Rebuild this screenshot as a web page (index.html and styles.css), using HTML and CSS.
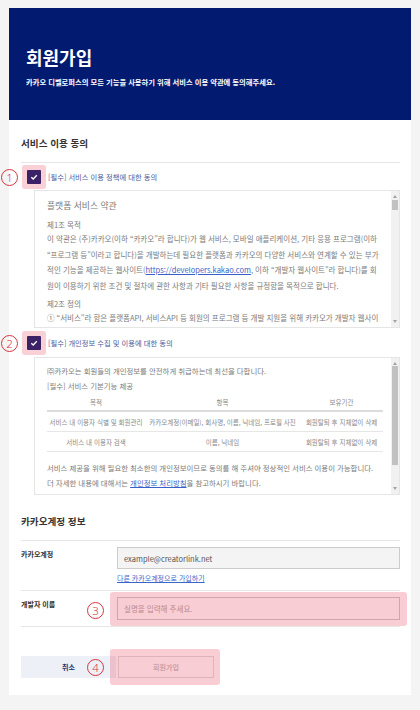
FILE: index.html
```html
<!DOCTYPE html>
<html lang="ko">
<head>
    <meta charset="UTF-8">
    <meta name="viewport" content="width=device-width, initial-scale=1.0">
    <title>회원가입</title>
    <link rel="stylesheet" href="styles.css">
</head>
<body>
    <div class="join-container">
        <div class="hero">
            <h1 class="hero-title">회원가입</h1>
            <p class="hero-desc">카카오 디벨로퍼스의 모든 기능을 사용하기 위해 서비스 이용 약관에 동의해주세요.</p>
        </div>

        <div class="content">
            <h2 class="section-title">서비스 이용 동의</h2>

            <div class="agree-row">
                <span class="mark">1</span>
                <span class="check-wrap">
                    <span class="check"><svg viewBox="0 0 14 14" width="14" height="14"><path d="M4.3 7.2 6.2 9 9.8 5.2" fill="none" stroke="#fff" stroke-width="1.3"/></svg></span>
                </span>
                <span class="agree-label">[필수] 서비스 이용 정책에 대한 동의</span>
            </div>
            <div class="terms">
                <div class="terms-body">
                    <p class="terms-title">플랫폼 서비스 약관</p>
                    <p class="article-title">제1조 목적</p>
                    <p class="article-text">이 약관은 (주)카카오(이하 “카카오”라 합니다)가 웹 서비스, 모바일 애플리케이션, 기타 응용 프로그램(이하 “프로그램 등”이라고 합니다)을 개발하는데 필요한 플랫폼과 카카오의 다양한 서비스와 연계할 수 있는 부가적인 기능을 제공하는 웹사이트(<a class="text-link" href="#">https://developers.kakao.com</a>, 이하 “개발자 웹사이트”라 합니다)를 회원이 이용하기 위한 조건 및 절차에 관한 사항과 기타 필요한 사항을 규정함을 목적으로 합니다.</p>
                    <p class="article-title">제2조 정의</p>
                    <p class="article-text">① “서비스”라 함은 플랫폼API, 서비스API 등 회원의 프로그램 등 개발 지원을 위해 카카오가 개발자 웹사이트를 통하여 제공하는 일체의 서비스를 말합니다.</p>
                </div>
                <div class="scrollbar">
                    <span class="arrow up"></span>
                    <span class="thumb short"></span>
                    <span class="arrow down"></span>
                </div>
            </div>

            <div class="agree-row second">
                <span class="mark">2</span>
                <span class="check-wrap">
                    <span class="check"><svg viewBox="0 0 14 14" width="14" height="14"><path d="M4.3 7.2 6.2 9 9.8 5.2" fill="none" stroke="#fff" stroke-width="1.3"/></svg></span>
                </span>
                <span class="agree-label">[필수] 개인정보 수집 및 이용에 대한 동의</span>
            </div>
            <div class="terms">
                <div class="terms-body privacy">
                    <p class="privacy-text">㈜카카오는 회원들의 개인정보를 안전하게 취급하는데 최선을 다합니다.</p>
                    <p class="privacy-text">[필수] 서비스 기본기능 제공</p>
                    <table class="privacy-table">
                        <colgroup>
                            <col style="width: 98px">
                            <col style="width: 155px">
                            <col>
                        </colgroup>
                        <tr>
                            <th>목적</th>
                            <th>항목</th>
                            <th>보유기간</th>
                        </tr>
                        <tr>
                            <td>서비스 내 이용자 식별 및 회원관리</td>
                            <td>카카오계정(이메일), 회사명, 이름, 닉네임, 프로필 사진</td>
                            <td>회원탈퇴 후 지체없이 삭제</td>
                        </tr>
                        <tr>
                            <td>서비스 내 이용자 검색</td>
                            <td>이름, 닉네임</td>
                            <td>회원탈퇴 후 지체없이 삭제</td>
                        </tr>
                    </table>
                    <p class="privacy-text note">서비스 제공을 위해 필요한 최소한의 개인정보이므로 동의를 해 주셔야 정상적인 서비스 이용이 가능합니다.<br>더 자세한 내용에 대해서는 <a class="text-link" href="#">개인정보 처리방침</a>을 참고하시기 바랍니다.</p>
                </div>
                <div class="scrollbar">
                    <span class="arrow up"></span>
                    <span class="thumb long"></span>
                    <span class="arrow down"></span>
                </div>
            </div>

            <h2 class="section-title account">카카오계정 정보</h2>

            <div class="form-row">
                <div class="form-label">카카오계정</div>
                <div class="form-field">
                    <input class="text-input" type="text" value="example@creatorlink.net" readonly>
                    <a class="sub-link" href="#">다른 카카오계정으로 가입하기</a>
                </div>
            </div>

            <div class="form-row">
                <div class="form-label">개발자 이름</div>
                <span class="mark field-mark">3</span>
                <div class="form-field highlight-wrap">
                    <input class="text-input name-input" type="text" placeholder="실명을 입력해 주세요.">
                    <span class="highlight field-highlight"></span>
                </div>
            </div>

            <div class="button-row">
                <button class="btn btn-cancel">취소</button>
                <span class="mark button-mark">4</span>
                <div class="highlight-wrap">
                    <button class="btn btn-submit">회원가입</button>
                    <span class="highlight button-highlight"></span>
                </div>
            </div>
        </div>
    </div>
</body>
</html>
```

FILE: styles.css
```css
body {
    margin: 0;
    background-color: #f4f4f4;
    font-family: "Noto Sans CJK KR", "Noto Sans", sans-serif;
}

.join-container {
    margin: 8px 9px 0;
    background-color: #fff;
    padding-bottom: 17px;
}

/* Header */
.hero {
    height: 112px;
    box-sizing: border-box;
    padding: 37px 17px 0;
    background-color: #021a6f;
    color: #fff;
}

.hero-title {
    margin: 0;
    font-size: 18px;
    line-height: 24px;
    font-weight: 700;
}

.hero-desc {
    margin: 7px 0 0;
    font-size: 7.3px;
    line-height: 12px;
    font-weight: 700;
}

.content {
    padding: 0 11px 0 12px;
}

.section-title {
    margin: 0;
    padding: 16px 0 12px;
    font-size: 9.6px;
    line-height: 14px;
    font-weight: 700;
    color: #333;
    border-bottom: 1px solid #e6e6e6;
}

.section-title.account {
    padding-top: 19px;
}

/* Agree rows */
.agree-row {
    position: relative;
    display: flex;
    align-items: center;
    height: 27px;
    padding-left: 1px;
}

.agree-row.second {
    height: 29px;
}

.check-wrap {
    display: flex;
    align-items: center;
    justify-content: center;
    width: 24px;
    height: 24px;
    background-color: #f8d0d6;
    border-radius: 3px;
}

.check {
    display: block;
    width: 14px;
    height: 14px;
    background-color: #3b2266;
    border-radius: 1px;
}

.check svg {
    display: block;
}

.agree-label {
    margin-left: 2px;
    font-size: 7.3px;
    color: #4d5a98;
}

/* Red numbered marks */
.mark {
    position: absolute;
    width: 15px;
    height: 15px;
    border: 1px solid #d7343f;
    border-radius: 50%;
    color: #d7343f;
    font-family: "Noto Sans", sans-serif;
    font-weight: 300;
    font-size: 11.5px;
    line-height: 15px;
    text-align: center;
}

.agree-row .mark {
    left: -20px;
    top: 50%;
    margin-top: -8px;
}

.field-mark {
    left: 66px;
    top: 11px;
}

.button-mark {
    left: 66px;
    top: 3px;
}

/* Terms boxes */
.terms {
    display: flex;
    height: 138px;
    margin-left: 13px;
    box-sizing: border-box;
    border: 1px solid #e5e5e5;
}

.terms-body {
    flex: 1;
    overflow: hidden;
    padding: 7px 8px 0 12px;
    font-size: 7.5px;
    color: #7a7a7a;
    word-break: break-all;
}

.terms-body p {
    margin: 0;
}

.terms-title {
    font-size: 8.8px;
    line-height: 16px;
    margin-bottom: 2px !important;
}

.article-title {
    line-height: 12px;
    margin-top: 5px !important;
}

.article-text {
    line-height: 15.5px;
}

.text-link {
    color: #3a5fc8;
    text-decoration: underline;
}

.terms-body.privacy {
    padding-top: 5px;
    font-size: 7.4px;
}

.privacy-text {
    line-height: 15px;
}

.privacy-text.note {
    margin-top: 8px !important;
}

.privacy-table {
    width: 100%;
    border-collapse: collapse;
    font-size: 6.5px;
    color: #888;
}

.privacy-table th {
    height: 17px;
    padding: 0;
    font-weight: 400;
    border-bottom: 2px solid #dcdcdc;
}

.privacy-table td {
    height: 19px;
    padding: 0;
    text-align: center;
    white-space: nowrap;
    border-bottom: 1px solid #e6e6e6;
}

/* Fake scrollbar */
.scrollbar {
    display: flex;
    flex-direction: column;
    align-items: center;
    width: 8px;
    background-color: #f1f1f1;
}

.arrow {
    width: 0;
    height: 0;
    border-left: 2.5px solid transparent;
    border-right: 2.5px solid transparent;
}

.arrow.up {
    margin-top: 4px;
    border-bottom: 3px solid #a3a3a3;
}

.arrow.down {
    margin-top: auto;
    margin-bottom: 4px;
    border-top: 3px solid #a3a3a3;
}

.thumb {
    width: 6px;
    background-color: #c1c1c1;
}

.thumb.short {
    height: 10px;
    margin-top: 2px;
}

.thumb.long {
    height: 99px;
    margin-top: 1px;
}

/* Account form */
.form-row {
    position: relative;
    display: grid;
    grid-template-columns: 96px 1fr;
    padding: 6px 0;
    border-bottom: 1px solid #e6e6e6;
}

.form-label {
    padding-top: 1px;
    font-size: 7px;
    line-height: 12px;
    font-weight: 700;
    color: #333;
}

.form-field {
    display: flex;
    flex-direction: column;
    align-items: flex-start;
}

.text-input {
    width: 100%;
    height: 22px;
    box-sizing: border-box;
    margin: 0;
    padding: 0 6px;
    border: 1px solid #cccccc;
    background-color: #f4f4f4;
    font-family: "Noto Sans CJK KR", "Noto Sans", sans-serif;
    font-size: 7.5px;
    color: #555;
    outline: none;
}

.name-input {
    height: 23px;
    background-color: #fff;
}

.name-input::placeholder {
    color: #aaa;
}

.sub-link {
    margin-top: 3px;
    font-size: 7px;
    line-height: 12px;
    color: #3a66cc;
    text-decoration: underline;
}

/* Pink annotation overlays */
.highlight-wrap {
    position: relative;
}

.highlight {
    position: absolute;
    background-color: rgba(230, 40, 70, 0.23);
    border-radius: 3px;
}

.field-highlight {
    top: -5px;
    right: -7px;
    bottom: -6px;
    left: -7px;
}

.button-highlight {
    top: -7px;
    right: -6px;
    bottom: -7px;
    left: -8px;
}

/* Buttons */
.button-row {
    position: relative;
    display: flex;
    gap: 2px;
    margin-top: 29px;
}

.btn {
    display: block;
    width: 96px;
    height: 22px;
    margin: 0;
    padding: 0;
    font-family: "Noto Sans CJK KR", "Noto Sans", sans-serif;
    font-size: 7px;
    font-weight: 700;
    cursor: pointer;
}

.btn-cancel {
    width: 95px;
    border: 1px solid #eef0f8;
    background-color: #eef0f8;
    color: #26336e;
}

.btn-submit {
    border: 1px solid #dddddd;
    background-color: #fff;
    color: #c6c6c6;
}
```
